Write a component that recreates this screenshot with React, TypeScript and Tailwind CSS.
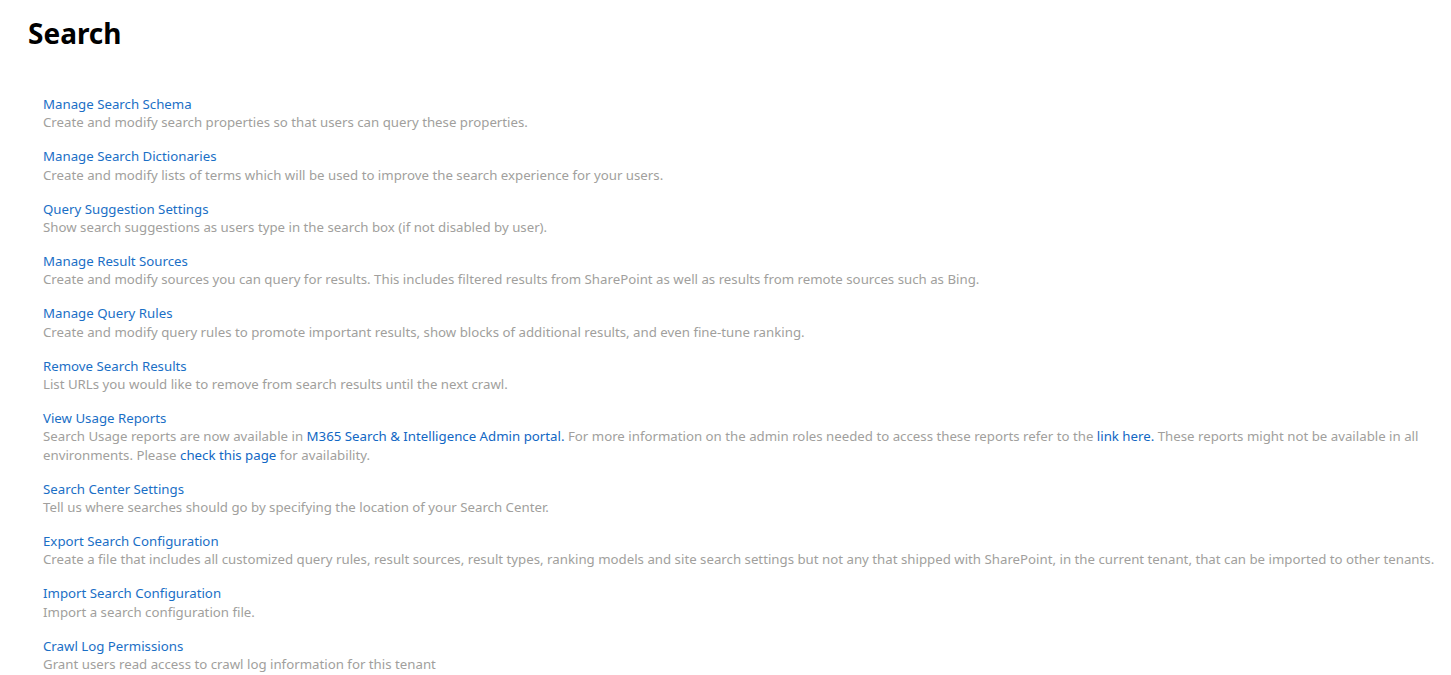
const items: { title: string; body: React.ReactNode }[] = [
  {
    title: "Manage Search Schema",
    body: "Create and modify search properties so that users can query these properties.",
  },
  {
    title: "Manage Search Dictionaries",
    body: "Create and modify lists of terms which will be used to improve the search experience for your users.",
  },
  {
    title: "Query Suggestion Settings",
    body: "Show search suggestions as users type in the search box (if not disabled by user).",
  },
  {
    title: "Manage Result Sources",
    body: "Create and modify sources you can query for results. This includes filtered results from SharePoint as well as results from remote sources such as Bing.",
  },
  {
    title: "Manage Query Rules",
    body: "Create and modify query rules to promote important results, show blocks of additional results, and even fine-tune ranking.",
  },
  {
    title: "Remove Search Results",
    body: "List URLs you would like to remove from search results until the next crawl.",
  },
  {
    title: "View Usage Reports",
    body: (
      <>
        Search Usage reports are now available in{" "}
        <a className="text-[#1167c4]">M365 Search &amp; Intelligence Admin portal.</a> For more information
        on the admin roles needed to access these reports refer to the <a className="text-[#1167c4]">link here.</a>{" "}
        These reports might not be available in all environments. Please{" "}
        <a className="text-[#1167c4]">check this page</a> for availability.
      </>
    ),
  },
  {
    title: "Search Center Settings",
    body: "Tell us where searches should go by specifying the location of your Search Center.",
  },
  {
    title: "Export Search Configuration",
    body: "Create a file that includes all customized query rules, result sources, result types, ranking models and site search settings but not any that shipped with SharePoint, in the current tenant, that can be imported to other tenants.",
  },
  {
    title: "Import Search Configuration",
    body: "Import a search configuration file.",
  },
  {
    title: "Crawl Log Permissions",
    body: "Grant users read access to crawl log information for this tenant",
  },
];

export default function App() {
  return (
    <div className="min-h-screen bg-white font-['Noto_Sans',sans-serif]">
      <div className="pl-[28px] pt-[15px]">
        <h1 className="text-[28px] font-bold leading-[36px] text-black">Search</h1>
      </div>
      <ul className="mt-[44px] flex flex-col gap-[15.5px] pl-[43px] pr-[8px]">
        {items.map((item) => (
          <li key={item.title} className="text-[13.25px] leading-[18.4px]">
            <a className="block text-[#1a6fc6]">{item.title}</a>
            <p className="text-[#a19f9d]">{item.body}</p>
          </li>
        ))}
      </ul>
    </div>
  );
}
